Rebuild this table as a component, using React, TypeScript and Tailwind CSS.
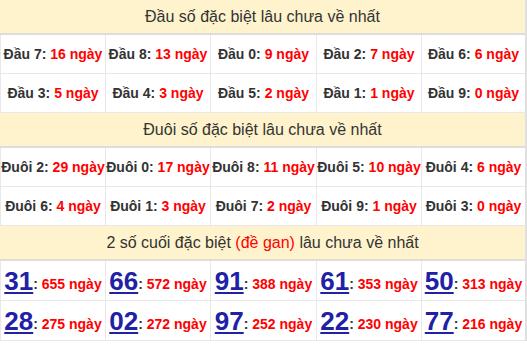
import React from "react";

const dau = [
  [["Đầu 7", "16"], ["Đầu 8", "13"], ["Đầu 0", "9"], ["Đầu 2", "7"], ["Đầu 6", "6"]],
  [["Đầu 3", "5"], ["Đầu 4", "3"], ["Đầu 5", "2"], ["Đầu 1", "1"], ["Đầu 9", "0"]],
];
const duoi = [
  [["Đuôi 2", "29"], ["Đuôi 0", "17"], ["Đuôi 8", "11"], ["Đuôi 5", "10"], ["Đuôi 4", "6"]],
  [["Đuôi 6", "4"], ["Đuôi 1", "3"], ["Đuôi 7", "2"], ["Đuôi 9", "1"], ["Đuôi 3", "0"]],
];
const gan = [
  [["31", "655"], ["66", "572"], ["91", "388"], ["61", "353"], ["50", "313"]],
  [["28", "275"], ["02", "272"], ["97", "252"], ["22", "230"], ["77", "216"]],
];

const widths = ["w-[105px]", "w-[105px]", "w-[106px]", "w-[105px]", "w-[104px]"];

function Header({ children }: { children: React.ReactNode }) {
  return (
    <div className="h-[35px] bg-[#fff3cd] border-b-2 border-[#dddddd] flex items-center justify-center text-[16px] text-[#333333]">
      {children}
    </div>
  );
}

function TextRows({ rows }: { rows: string[][][] }) {
  return (
    <>
      {rows.map((r, i) => (
        <div key={i} className="flex h-[39px] border-b border-[#e8e8e8] border-l">
          {r.map(([label, n], j) => (
            <div
              key={j}
              className={`${widths[j]} shrink-0 border-r border-[#e8e8e8] flex items-center justify-center text-[14px] font-bold text-[#333333] whitespace-nowrap`}
            >
              {label}:&nbsp;<span className="text-[#ff0000]">{n} ngày</span>
            </div>
          ))}
        </div>
      ))}
    </>
  );
}

export default function App() {
  return (
    <div className="w-[527px] h-[344px] overflow-hidden bg-white" style={{ fontFamily: '"Liberation Sans", Arial, sans-serif' }}>
      <div className="flex">
        <div className="w-[525px]">
          <Header>Đầu số đặc biệt lâu chưa về nhất</Header>
          <TextRows rows={dau} />
          <Header>Đuôi số đặc biệt lâu chưa về nhất</Header>
          <TextRows rows={duoi} />
          <Header>
            2 số cuối đặc biệt&nbsp;<span className="text-[#ff0000]">(đề gan)</span>&nbsp;lâu chưa về nhất
          </Header>
          {gan.map((r, i) => (
            <div key={i} className="flex h-[40px] border-b border-[#e8e8e8] border-l">
              {r.map(([num, n], j) => (
                <div
                  key={j}
                  className={`${widths[j]} shrink-0 border-r border-[#e8e8e8] flex items-center justify-center whitespace-nowrap font-bold`}
                >
                  <span className="text-[26px] leading-none text-[#2121a6] underline decoration-2 underline-offset-2">{num}</span>
                  <span className="text-[14px] text-[#333333] mt-[8px]">:&nbsp;</span>
                  <span className="text-[14px] text-[#ff0000] mt-[8px]">{n} ngày</span>
                </div>
              ))}
            </div>
          ))}
        </div>
        <div className="w-[2px] bg-[#e0e0e0]" />
      </div>
    </div>
  );
}
